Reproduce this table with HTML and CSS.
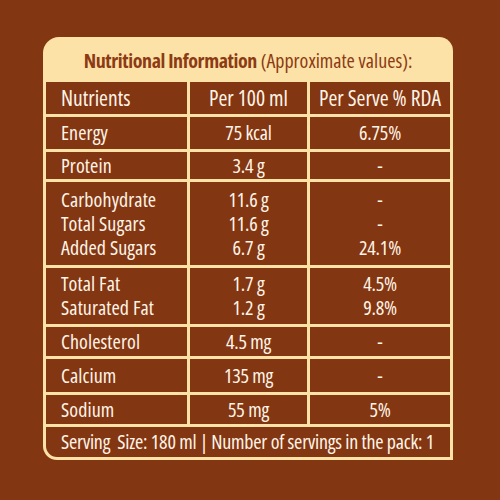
FILE: index.html
```
<html lang="en">

<head>
    <meta charset="UTF-8">
    <meta name="viewport" content="width=device-width, initial-scale=1.0">
    <title>Nutritional Information</title>
    <link rel="stylesheet" href="styles.css">
</head>

<body>
    <div class="panel">
        <div class="title">
            <b>Nutritional Information</b> (Approximate values):
        </div>
        <div class="sheet">
            <div class="row head">
                <div class="cell name">Nutrients</div>
                <div class="cell">Per 100 ml</div>
                <div class="cell">Per Serve % RDA</div>
            </div>
            <div class="row energy">
                <div class="cell name">Energy</div>
                <div class="cell">75 kcal</div>
                <div class="cell">6.75%</div>
            </div>
            <div class="row protein">
                <div class="cell name">Protein</div>
                <div class="cell">3.4 g</div>
                <div class="cell">-</div>
            </div>
            <div class="row carbs">
                <div class="cell name">
                    <div class="line">Carbohydrate</div>
                    <div class="line">Total Sugars</div>
                    <div class="line">Added Sugars</div>
                </div>
                <div class="cell">
                    <div class="line">11.6 g</div>
                    <div class="line">11.6 g</div>
                    <div class="line">6.7 g</div>
                </div>
                <div class="cell">
                    <div class="line">-</div>
                    <div class="line">-</div>
                    <div class="line">24.1%</div>
                </div>
            </div>
            <div class="row fat">
                <div class="cell name">
                    <div class="line">Total Fat</div>
                    <div class="line">Saturated Fat</div>
                </div>
                <div class="cell">
                    <div class="line">1.7 g</div>
                    <div class="line">1.2 g</div>
                </div>
                <div class="cell">
                    <div class="line">4.5%</div>
                    <div class="line">9.8%</div>
                </div>
            </div>
            <div class="row chol">
                <div class="cell name">Cholesterol</div>
                <div class="cell">4.5 mg</div>
                <div class="cell">-</div>
            </div>
            <div class="row calcium">
                <div class="cell name">Calcium</div>
                <div class="cell">135 mg</div>
                <div class="cell">-</div>
            </div>
            <div class="row sodium">
                <div class="cell name">Sodium</div>
                <div class="cell">55 mg</div>
                <div class="cell">5%</div>
            </div>
            <div class="footer">Serving&nbsp; Size: 180 ml | Number of servings in the pack: 1</div>
        </div>
    </div>
</body>

</html>
```

FILE: styles.css
```
html,
body {
    width: 100%;
    height: 100%;
    padding: 0;
    margin: 0;
    background-color: #833612;
    font-family: "Open Sans", sans-serif;
    font-stretch: 75%;
    color: #fff4e6;
}

.panel {
    width: 410px;
    margin: 37px 0 0 43px;
}

.title {
    height: 45px;
    box-sizing: border-box;
    padding-top: 10px;
    background-color: #fde2a7;
    border-radius: 16px 14px 0 0;
    color: #8c3b14;
    font-size: 20px;
    text-align: center;
}

.title b {
    font-weight: 700;
    letter-spacing: -0.4px;
}

.sheet {
    border: 3px solid #fde2a7;
    border-top: none;
    border-bottom-left-radius: 14px;
}

.row {
    display: grid;
    grid-template-columns: 144px 120px 1fr;
    border-bottom: 3px solid #fde2a7;
    box-sizing: border-box;
    font-size: 20px;
    line-height: 24px;
}

.cell {
    display: flex;
    flex-direction: column;
    align-items: center;
    justify-content: center;
    text-align: center;
    letter-spacing: -0.2px;
    border-right: 3px solid #fde2a7;
}

.cell:last-child {
    border-right: none;
}

.cell.name {
    align-items: flex-start;
    text-align: left;
    letter-spacing: 0.1px;
    padding-left: 15px;
}

.line {
    height: 24px;
}

.head { height: 35px; font-size: 21.5px; }
.head .cell { letter-spacing: 0; }
.energy { height: 35px; }
.protein { height: 30px; }
.carbs { height: 86px; }
.fat { height: 59px; }
.chol { height: 32px; }
.calcium { height: 36px; }
.sodium { height: 32px; }

.footer {
    height: 30px;
    padding-left: 15px;
    font-size: 20px;
    letter-spacing: -0.2px;
    line-height: 30px;
}
```
